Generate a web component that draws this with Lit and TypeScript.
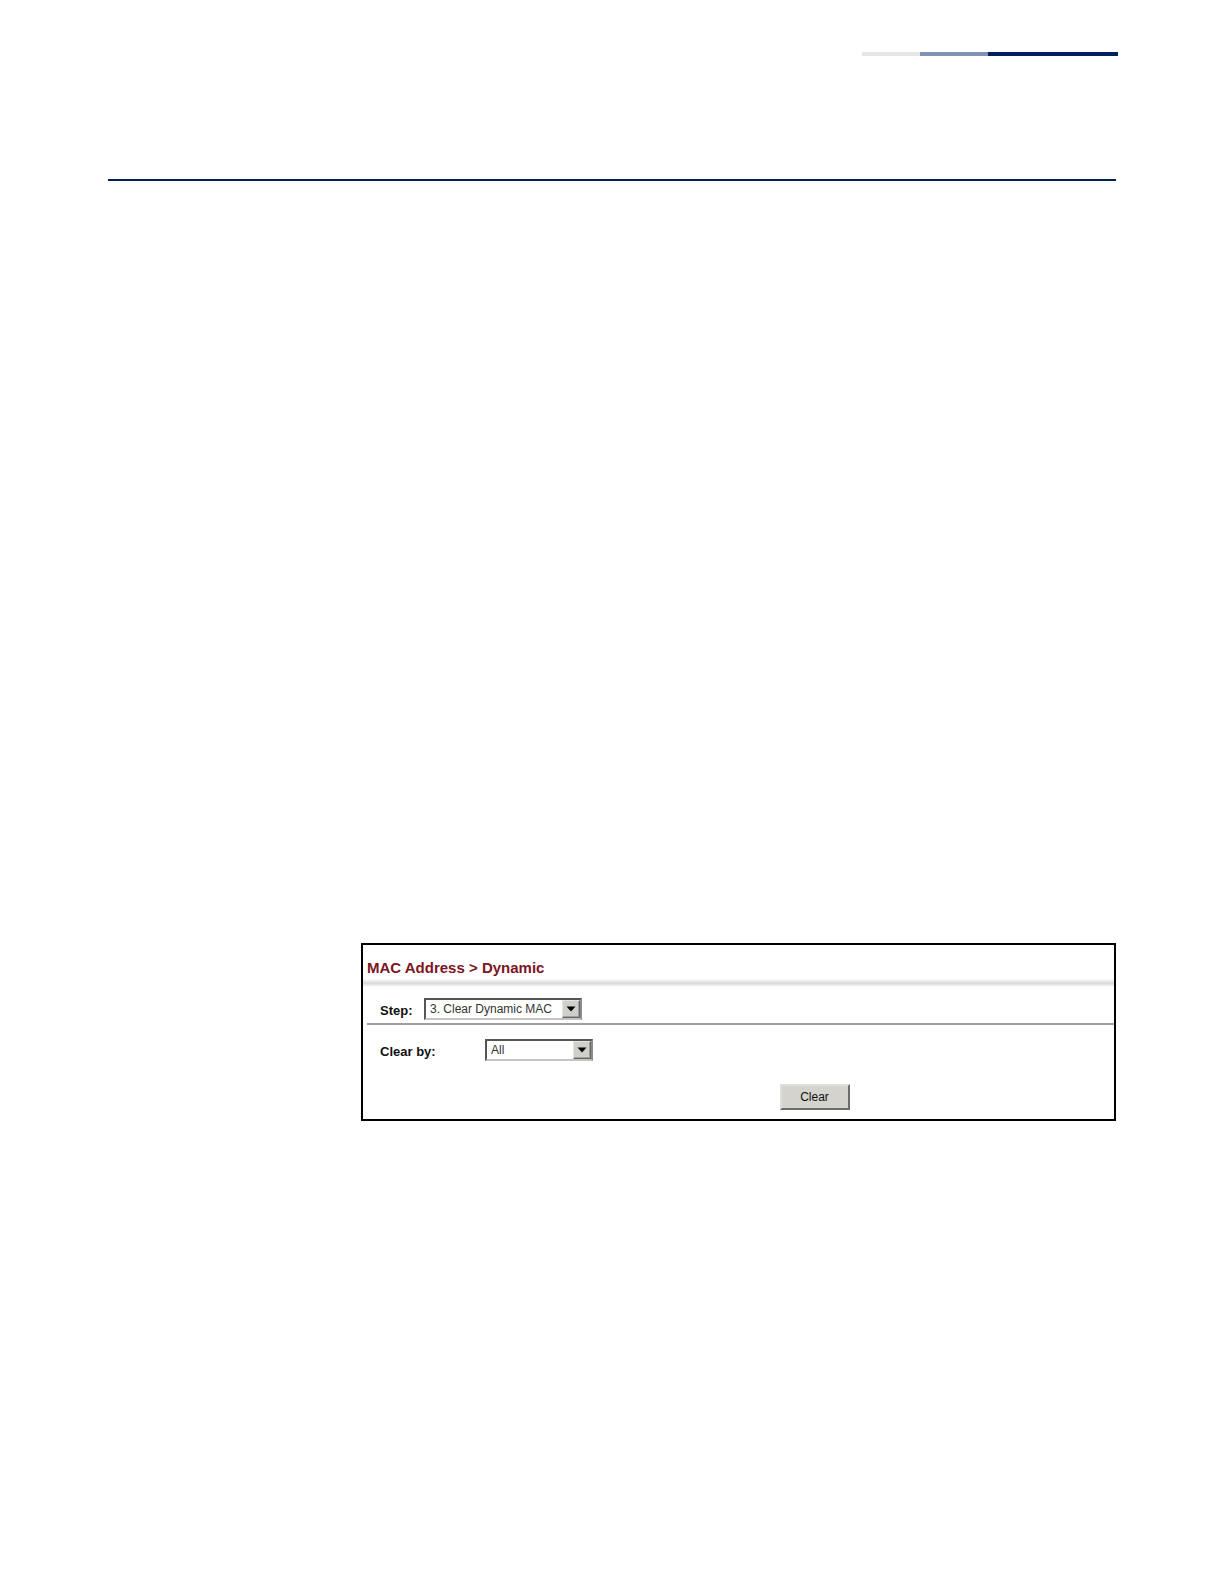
import { LitElement, html, css } from "lit";
import { customElement, property } from "lit/decorators.js";

@customElement("classic-select")
class ClassicSelect extends LitElement {
  @property({ type: Array }) options: string[] = [];
  @property() label = "";

  static styles = css`
    :host {
      display: block;
    }
    .field {
      display: grid;
      grid-template-columns: auto 1fr;
      align-items: center;
    }
    .label {
      width: var(--label-width, auto);
      padding-top: 4px;
      font-weight: bold;
      color: #111;
    }
    .box {
      display: grid;
      grid-template-columns: 1fr auto;
      width: var(--box-width, 120px);
      height: 22px;
      box-sizing: border-box;
      border: 2px solid;
      border-color: #555 #8c8c8c #c4c4c4 #555;
      background: #fff;
    }
    select {
      grid-area: 1 / 1 / 2 / 3;
      appearance: none;
      min-width: 0;
      margin: 0;
      padding: 0 20px 0 4px;
      border: 0;
      border-radius: 0;
      background: transparent;
      color: #333;
      font: inherit;
      font-size: 12px;
    }
    .arrow {
      grid-area: 1 / 2 / 2 / 3;
      display: flex;
      align-items: center;
      justify-content: center;
      width: 18px;
      box-sizing: border-box;
      border: 1px solid;
      border-color: #e4e4e0 #666 #666 #e4e4e0;
      background: #d0d0ca;
      box-shadow: inset -1px -1px #a2a29c;
      pointer-events: none;
    }
  `;

  render() {
    return html`
      <div class="field">
        <label class="label" for="choice">${this.label}</label>
        <div class="box">
          <select id="choice">
            ${this.options.map((o) => html`<option>${o}</option>`)}
          </select>
          <span class="arrow" aria-hidden="true">
            <svg width="10" height="6" viewBox="0 0 10 6">
              <path d="M0.5 0.5H9.5L5 5.5Z" fill="#000" />
            </svg>
          </span>
        </div>
      </div>
    `;
  }
}

@customElement("app-root")
class AppRoot extends LitElement {
  static styles = css`
    :host {
      display: block;
      min-height: 100vh;
      box-sizing: border-box;
      padding: 52px 108px;
      background: #fff;
      font: 13px/16px "Liberation Sans", Arial, sans-serif;
    }
    .stripe {
      display: flex;
      justify-content: flex-end;
      height: 4px;
      margin-right: -2px;
    }
    .light {
      width: 58px;
      background: #e5e6e8;
    }
    .mid {
      width: 68px;
      background: #8292b4;
    }
    .dark {
      width: 130px;
      background: #002060;
    }
    .rule {
      height: 2px;
      margin: 123px 0 0;
      border: 0;
      background: #00204e;
    }
    .panel {
      margin: 762px 0 0 253px;
      border: 2px solid #000;
      background: #fff;
    }
    h1 {
      margin: 0;
      padding: 13px 4px 1px;
      font-size: 15px;
      line-height: 20px;
      color: #7c1422;
    }
    .shade {
      height: 8px;
      background: linear-gradient(#fff, #dcdcdc 45%, #dcdcdc 60%, #fff);
    }
    .step {
      --label-width: 44px;
      --box-width: 158px;
      margin-left: 4px;
      padding: 11px 0 3px 13px;
      border-bottom: 2px solid #a0a0a0;
    }
    .clear-by {
      --label-width: 105px;
      --box-width: 108px;
      padding: 14px 17px 0;
    }
    .actions {
      display: flex;
      justify-content: center;
      padding: 23px 0 9px 152px;
    }
    button {
      width: 70px;
      height: 26px;
      padding: 0;
      border: 2px solid;
      border-color: #dededa #6c6c68 #6c6c68 #dededa;
      border-radius: 0;
      background: #d4d3cd;
      color: #111;
      font: inherit;
      font-size: 12px;
    }
  `;

  render() {
    return html`
      <header>
        <div class="stripe">
          <span class="light"></span><span class="mid"></span><span class="dark"></span>
        </div>
        <hr class="rule" />
      </header>
      <main class="panel">
        <h1>MAC Address &gt; Dynamic</h1>
        <div class="shade"></div>
        <classic-select
          class="step"
          label="Step:"
          .options=${["3. Clear Dynamic MAC"]}
        ></classic-select>
        <classic-select
          class="clear-by"
          label="Clear by:"
          .options=${["All"]}
        ></classic-select>
        <div class="actions"><button type="button">Clear</button></div>
      </main>
    `;
  }
}
